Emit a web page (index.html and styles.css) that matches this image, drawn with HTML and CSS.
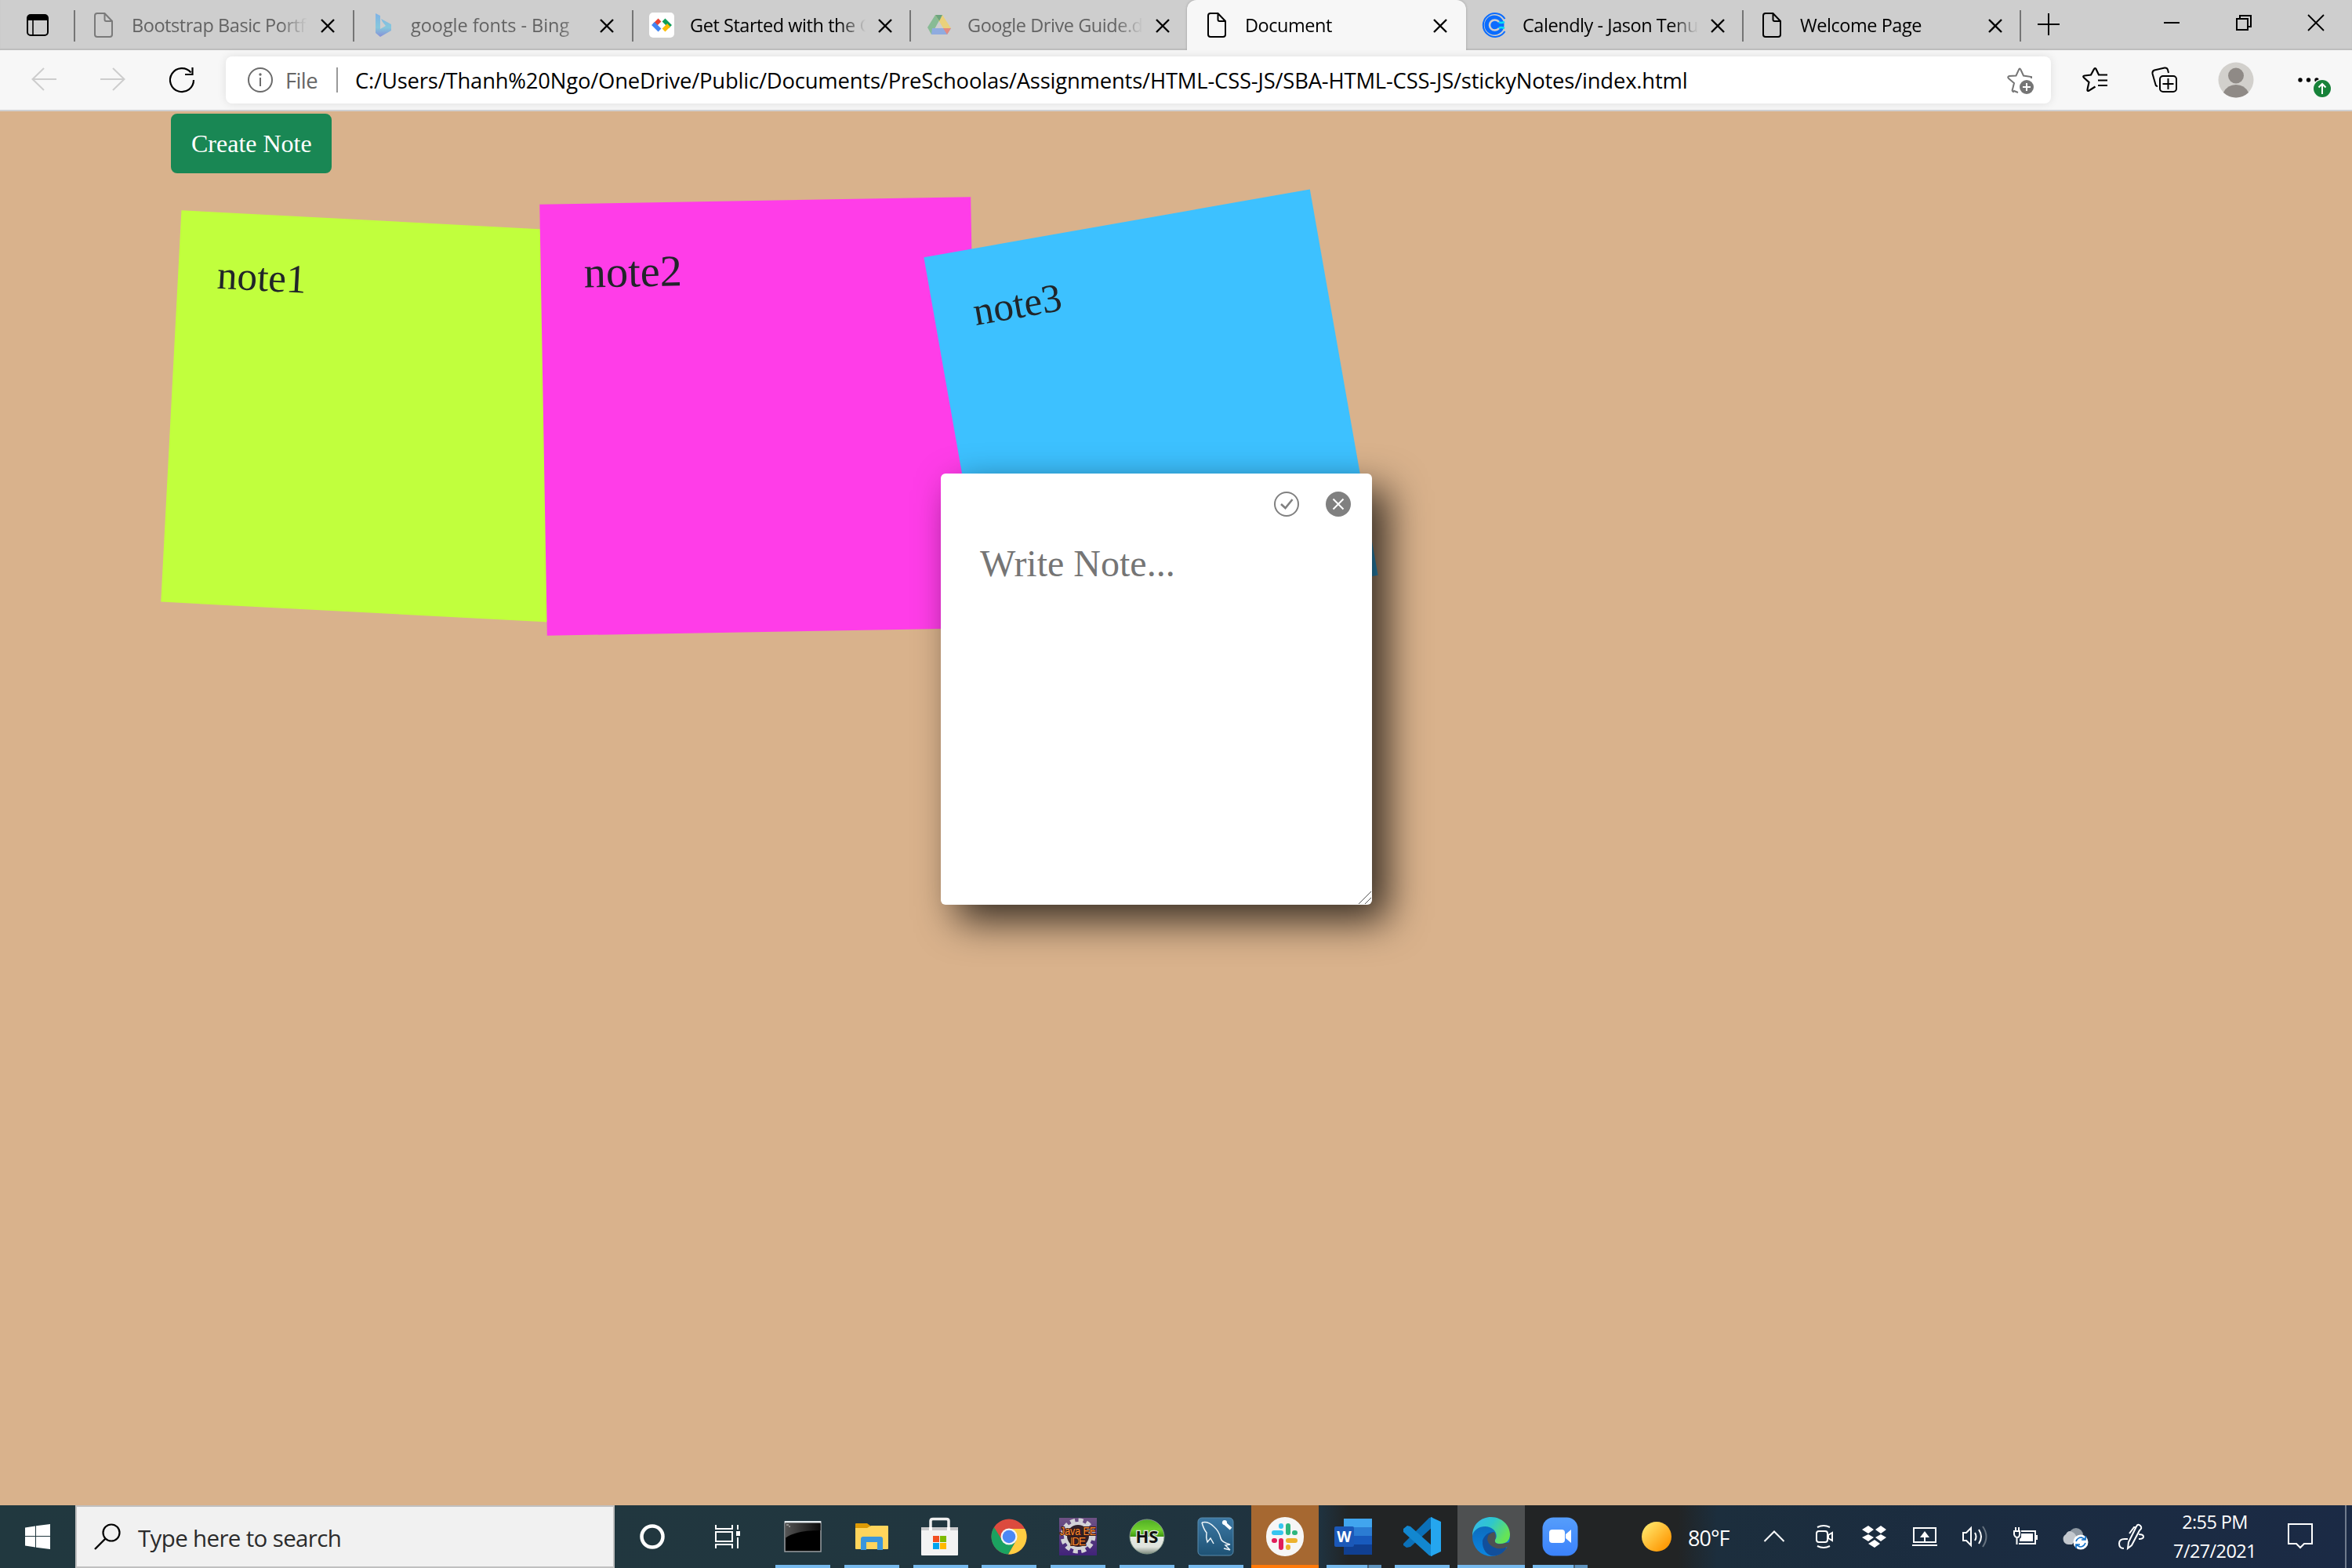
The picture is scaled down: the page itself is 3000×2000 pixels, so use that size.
FILE: index.html
```html
<!DOCTYPE html>
<html lang="en">
<head>
<meta charset="utf-8">
<title>Document</title>
<link rel="stylesheet" href="styles.css">
</head>
<body>
<svg class="defs" width="0" height="0">
  <defs>
    <symbol id="page" viewBox="0 0 32 32"><path d="M7 1H17.5L27 11V28Q27 31 24 31H8Q5 31 5 28V4Q5 1 8 1ZM17.5 1V9Q17.5 11 19.500 11H27" fill="none" stroke="currentColor" stroke-width="2"/></symbol>
    <symbol id="x" viewBox="0 0 20 20"><path d="M2 2 18 18M18 2 2 18" stroke="currentColor" stroke-width="2.4" fill="none"/></symbol>
    <linearGradient id="bingGrad" x1="0" y1="0" x2="0" y2="1"><stop offset="0" stop-color="#7fb2e6"/><stop offset=".6" stop-color="#86c8dc"/><stop offset="1" stop-color="#8790d8"/></linearGradient>
    <linearGradient id="sunGrad" x1="0" y1="0" x2="1" y2="1"><stop offset=".1" stop-color="#ffe66b"/><stop offset=".8" stop-color="#ff9d0a"/></linearGradient>
    <linearGradient id="cmdGrad" x1="0" y1="0" x2="1" y2="0"><stop offset="0" stop-color="#555"/><stop offset="1" stop-color="#0c0c0c"/></linearGradient>
    <linearGradient id="ideGrad" x1="0" y1="0" x2="0" y2="1"><stop offset="0" stop-color="#6f5285"/><stop offset="1" stop-color="#41237a"/></linearGradient>
    <linearGradient id="hsGrad" x1="0" y1="0" x2="0" y2="1"><stop offset="0" stop-color="#4fae24"/><stop offset=".3" stop-color="#72d030"/><stop offset=".49" stop-color="#3f9a10"/><stop offset=".5" stop-color="#e8ece6"/><stop offset=".8" stop-color="#dfe3dd"/><stop offset="1" stop-color="#7d8a7d"/></linearGradient>
    <linearGradient id="sqlGrad" x1="0" y1="0" x2="0" y2="1"><stop offset="0" stop-color="#3c78a4"/><stop offset="1" stop-color="#1e5274"/></linearGradient>
    <linearGradient id="zoomGrad" x1="0" y1="0" x2="0" y2="1"><stop offset="0" stop-color="#559dfb"/><stop offset="1" stop-color="#3b82fb"/></linearGradient>
    <linearGradient id="edgeTop" x1="0" y1="0" x2="1" y2=".5"><stop offset="0" stop-color="#36b5ef"/><stop offset=".5" stop-color="#2fc7cc"/><stop offset="1" stop-color="#66e455"/></linearGradient>
    <linearGradient id="edgeLeft" x1="0" y1="0" x2="0" y2="1"><stop offset="0" stop-color="#0d63b4"/><stop offset="1" stop-color="#0b86e0"/></linearGradient>
  </defs>
</svg>

<header class="tabs">
  <div class="tab-actions"><svg width="28" height="28" viewBox="0 0 28 28"><rect x="1" y="1" width="26" height="26" rx="4" fill="none" stroke="#000" stroke-width="2"/><path d="M1 8V4Q1 1 4 1H24Q27 1 27 4V8Z"/><path d="M8 8V27" stroke="#000" stroke-width="1.6"/></svg></div>
  <div class="tab asleep"><svg class="fav" width="32" height="32"><use href="#page"/></svg><span class="title">Bootstrap Basic Portfolio</span><svg class="close" width="20" height="20"><use href="#x"/></svg></div>
  <div class="tab asleep"><svg class="fav" width="32" height="32" viewBox="0 0 32 32"><path d="M7 1 13 4V21L20 17 16 12 14 8 27 15V23L13 31 7 26Z" fill="url(#bingGrad)"/></svg><span class="title bing">google fonts - Bing</span><svg class="close" width="20" height="20"><use href="#x"/></svg></div>
  <div class="tab"><svg class="fav" width="32" height="32" viewBox="0 0 32 32"><rect width="32" height="32" rx="5" fill="#fff"/><g fill="none" stroke-width="5.500"><path d="M13.500 9.500 7 16" stroke="#ea4335"/><path d="M5 14 13.500 22.500" stroke="#4285f4"/><path d="M18.500 9.500 27 18" stroke="#0f9d58"/><path d="M25 16 18.500 22.500" stroke="#fbbc04"/></g></svg><span class="title">Get Started with the Google</span><svg class="close" width="20" height="20"><use href="#x"/></svg></div>
  <div class="tab asleep"><svg class="fav" width="32" height="32" viewBox="0 0 32 32"><path d="M11 3H20L10 21 6 28 1 19Z" fill="#88bb95"/><path d="M11 3H20L31 20H21Z" fill="#ead17b"/><path d="M7 20H31L26 28H6Z" fill="#8fabdf"/><path d="M21 20H31L26 28Z" fill="#e38a80"/><path d="M11 3H20L16 11Z" fill="#6da47e"/><path d="M16 12 21 20H11Z" fill="#cecece"/></svg><span class="title">Google Drive Guide.docx</span><svg class="close" width="20" height="20"><use href="#x"/></svg></div>
  <div class="tab active"><svg class="fav" width="32" height="32"><use href="#page"/></svg><span class="title">Document</span><svg class="close" width="20" height="20"><use href="#x"/></svg></div>
  <div class="tab after"><svg class="fav" width="32" height="32" viewBox="0 0 32 32"><circle cx="16" cy="16" r="12.500" fill="#0a6cff"/><path d="M29.500 8A15 15 0 1 0 29.500 24" fill="none" stroke="#0a6cff" stroke-width="2"/><path d="M22 12Q20 9.500 16.500 9.500A6.500 6.500 0 0 0 16.500 22.500Q20 22.500 22 20" fill="none" stroke="#cecece" stroke-width="2.600"/><path d="M22 12Q24 14 29 12M22 20Q24 18 29 20" fill="none" stroke="#0ae0f4" stroke-width="2.600"/></svg><span class="title">Calendly - Jason Tenuta</span><svg class="close" width="20" height="20"><use href="#x"/></svg></div>
  <div class="tab"><svg class="fav" width="32" height="32"><use href="#page"/></svg><span class="title">Welcome Page</span><svg class="close" width="20" height="20"><use href="#x"/></svg></div>
  <div class="window-controls">
    <svg width="28" height="28" viewBox="0 0 28 28"><path d="M0 14H28M14 0V28" stroke="#000" stroke-width="2"/></svg>
    <div class="sys">
      <svg width="20" height="20" viewBox="0 0 20 20"><path d="M0 10H20" stroke="#000" stroke-width="2"/></svg>
      <svg width="20" height="20" viewBox="0 0 20 20"><path d="M1 5H15V19H1ZM5 5V1H19V15H15" fill="none" stroke="#000" stroke-width="2"/></svg>
      <svg width="20" height="20" viewBox="0 0 20 20"><path d="M0 0 20 20M20 0 0 20" stroke="#000" stroke-width="1.8"/></svg>
    </div>
  </div>
</header>

<nav class="toolbar">
  <div class="nav-buttons">
    <svg width="32" height="32" viewBox="0 0 32 32"><path d="M32 15H1M16 1 1.500 15 16 29" fill="none" stroke="#cdcdcd" stroke-width="2"/></svg>
    <svg width="32" height="32" viewBox="0 0 32 32"><path d="M0 15H31M16 1 30.500 15 16 29" fill="none" stroke="#cdcdcd" stroke-width="2"/></svg>
    <svg width="32" height="32" viewBox="0 0 32 32"><path d="M31 16A15 15 0 1 1 27.500 6.500M29.500 0V9H20" fill="none" stroke="#000" stroke-width="2.200"/></svg>
  </div>
  <div class="address">
    <svg width="32" height="32" viewBox="0 0 32 32"><circle cx="16" cy="16" r="15" fill="none" stroke="#6b6b6b" stroke-width="2"/><path d="M16 13V24" stroke="#6b6b6b" stroke-width="2"/><circle cx="16" cy="9" r="1.700" fill="#6b6b6b"/></svg>
    <span class="scheme">File</span>
    <span class="rule"></span>
    <span class="url">C:/Users/Thanh%20Ngo/OneDrive/Public/Documents/PreSchoolas/Assignments/HTML-CSS-JS/SBA-HTML-CSS-JS/stickyNotes/index.html</span>
    <svg class="star" width="36" height="36" viewBox="0 0 36 36"><path d="M14 32 9 30 8 31Q6 30 7 28L9 20 2 14Q0 12 3 11L11.500 10.500 15 3Q16 0 17.500 3L21 10.500 31 12V14" fill="none" stroke="#757575" stroke-width="2"/><circle cx="25" cy="25" r="9" fill="#757575"/><path d="M25 20V30M20 25H30" stroke="#fff" stroke-width="2"/></svg>
  </div>
  <div class="tools">
    <svg width="34" height="34" viewBox="0 0 34 34"><path d="M16.500 25.500 8 31Q6 31 6.500 29L8.500 20 2 14Q0 12 3 11.500L11 10.500 15 3Q16 1 17.500 3L21 10.500H32M20 17.500H32M20 24H32" fill="none" stroke="#000" stroke-width="2.200"/></svg>
    <svg width="34" height="34" viewBox="0 0 34 34"><rect x="11" y="12" width="21" height="20" rx="4" fill="none" stroke="#000" stroke-width="2"/><path d="M21.500 15V29M14.500 22H28.500M8 25Q6 25 5.500 23L1.500 9Q1 5.500 4 4.500L17 1.500Q20 1 21 4L22 8" fill="none" stroke="#000" stroke-width="2"/></svg>
    <svg width="46" height="46" viewBox="0 0 46 46"><circle cx="23" cy="23" r="22.500" fill="#d2d0cc"/><circle cx="23" cy="17.500" r="10" fill="#8f8a86"/><path d="M7 39Q12 29 23 29T39 39Q32 45.500 23 45.500T7 39Z" fill="#8f8a86"/></svg>
    <svg width="46" height="46" viewBox="0 0 46 46"><circle cx="6" cy="23" r="2.700"/><circle cx="16.500" cy="23" r="2.700"/><circle cx="27" cy="23" r="2.700"/><circle cx="34" cy="34" r="12.500" fill="#f7f7f7"/><circle cx="34" cy="34" r="11" fill="#178239"/><path d="M34 41V28M29.500 32.500 34 28 38.500 32.500" fill="none" stroke="#fff" stroke-width="2"/></svg>
  </div>
</nav>

<main class="board">
  <button class="create">Create Note</button>
  <section class="notes">
    <article class="note lime">note1</article>
    <article class="note pink">note2</article>
    <article class="note sky">note3</article>
  </section>
  <form class="editor">
    <div class="editor-actions">
      <svg width="32" height="32" viewBox="0 0 32 32"><circle cx="16" cy="16" r="15" fill="none" stroke="#808080" stroke-width="2"/><path d="M9 16 14.500 21 23.500 10" fill="none" stroke="#808080" stroke-width="2.600"/></svg>
      <svg width="32" height="32" viewBox="0 0 32 32"><circle cx="16" cy="16" r="16" fill="#808080"/><path d="M9.500 9.500 22.500 22.500M22.500 9.500 9.500 22.500" stroke="#fff" stroke-width="2"/></svg>
    </div>
    <p class="placeholder">Write Note...</p>
    <svg class="grip" width="18" height="18" viewBox="0 0 18 18"><path d="M1 17 17 1M9 17 17 9" stroke="#555" stroke-width="1"/></svg>
  </form>
</main>

<footer class="taskbar">
  <div class="start"><svg width="32" height="32" viewBox="0 0 32 32"><path d="M0 4.500 13 2.500V15H0ZM14 2.300 32 0V15H14ZM0 16H13V29.500L0 27.500ZM14 16H32V32L14 29.700Z" fill="#fff"/></svg></div>
  <div class="search"><svg width="34" height="34" viewBox="0 0 34 34"><circle cx="22" cy="12" r="10.500" fill="none" stroke="#000" stroke-width="2.200"/><path d="M14.500 19.500 1 33" stroke="#000" stroke-width="2.400"/></svg><span>Type here to search</span></div>
  <div class="launch"><svg width="34" height="34" viewBox="0 0 34 34"><circle cx="17" cy="17" r="13.500" fill="none" stroke="#fff" stroke-width="4.500"/></svg></div>
  <div class="launch"><svg width="34" height="32" viewBox="0 0 34 32"><g fill="none" stroke="#fff" stroke-width="2"><path d="M2 1V6H23V1M2 10H23V22H2ZM2 31V26H23V31M30 1V7M30 17V31"/></g><rect x="28" y="9" width="5" height="6" fill="#fff"/></svg></div>
  <div class="apps">
    <div class="app run"><svg width="48" height="40" viewBox="0 0 48 40"><rect x="1" y="1" width="46" height="38" fill="#000" stroke="#9a9fa3" stroke-width="1.500"/><path d="M1.500 3H46.500V12Q14 12 1.500 22Z" fill="url(#cmdGrad)"/><rect x="1" y="0" width="46" height="2.500" fill="#e6edf1"/><path d="M3 5H6M6 7H8" stroke="#ccc"/></svg></div>
    <div class="app run"><svg width="42" height="36" viewBox="0 0 42 36"><path d="M0 2Q0 1 1 1H15L19 4V9H0Z" fill="#dd9a05"/><path d="M0 7H15L20 4H41Q42 4 42 5V33Q42 34 41 34H1Q0 34 0 33Z" fill="#ffd55c"/><path d="M7 35V21Q7 18 10 18H32Q35 18 35 21V35H28V25H14V35Z" fill="#3b96db"/></svg></div>
    <div class="app run"><svg width="48" height="48" viewBox="0 0 48 48"><path d="M12 15V4Q12 1.500 15 1.500H32Q35 1.500 35 4V15" fill="none" stroke="#eee" stroke-width="3.500"/><path d="M0 12H47V47Q47 48 46 48H1Q0 48 0 47Z" fill="#f3f3f3"/><path d="M0 12H47V16H0Z" fill="#c9c9cb"/><path d="M10 12H14V16H10ZM33 12H37V16H33Z" fill="#fff"/><path d="M15 23H23V31H15Z" fill="#f25022"/><path d="M24 23H32V31H24Z" fill="#7fba00"/><path d="M15 32H23V40H15Z" fill="#00a4ef"/><path d="M24 32H32V40H24Z" fill="#ffb900"/></svg></div>
    <div class="app run"><svg width="46" height="46" viewBox="0 0 46 46"><circle cx="23" cy="23" r="22.500" fill="#dc4b3e"/><path d="M23 13H43.200A22.500 22.500 0 0 1 22 45.500L32 28Z" fill="#ffcd42"/><path d="M4 11A22.500 22.500 0 0 0 22 45.500L32 28 14.500 28Z" fill="#1ba260"/><circle cx="23" cy="23" r="10.500" fill="#f4f4f4"/><circle cx="23" cy="23" r="8.300" fill="#4b88f5"/></svg></div>
    <div class="app run"><svg width="48" height="48" viewBox="0 0 48 48"><rect width="48" height="48" fill="url(#ideGrad)"/><circle cx="24" cy="23" r="20" fill="none" stroke="#d4d4d8" stroke-width="5" stroke-dasharray="6 4.470"/><circle cx="24" cy="23" r="16" fill="#302028" stroke="#d4d4d8" stroke-width="4"/><g fill="#ff8c2e" stroke="#3a1a14" stroke-width="2" paint-order="stroke" font-family="Liberation Sans, sans-serif" font-size="14" text-anchor="middle"><text x="24" y="22" textLength="46" lengthAdjust="spacingAndGlyphs">Java EE</text><text x="24" y="35" textLength="20">IDE</text></g></svg></div>
    <div class="app run"><svg width="46" height="46" viewBox="0 0 46 46"><circle cx="23" cy="23" r="22" fill="url(#hsGrad)" stroke="#84998a"/><text x="23" y="31" text-anchor="middle" font-family="Open Sans, sans-serif" font-weight="700" font-size="22" fill="#111" stroke="#dfe8dc" stroke-width="2.500" paint-order="stroke">HS</text></svg></div>
    <div class="app run"><svg width="48" height="50" viewBox="0 0 48 50"><rect x="1" y="1" width="45" height="48" rx="5" fill="url(#sqlGrad)" stroke="#5a8cad"/><path d="M6 7Q14 5 21 12 28 18 30 27 31 32 42 35L36 36 42 42M6 7Q8 15 12 20 11 26 13 32L17 27 21 34M34 40 42 42" fill="none" stroke="#eef5f8" stroke-width="1.500"/><path d="M33 6 43 15" stroke="#fff" stroke-width="4"/><circle cx="35" cy="7" r="3" fill="#fff"/></svg></div>
    <div class="app slack"><svg width="50" height="52" viewBox="0 0 50 52"><rect x="1" y="1" width="48" height="50" rx="24" fill="#f6f6f6"/><g stroke-width="6" stroke-linecap="round"><path d="M11 21H20" stroke="#36c5f0"/><path d="M20 13V12" stroke="#36c5f0"/><path d="M29 12V21" stroke="#2eb67d"/><path d="M37 21H38" stroke="#2eb67d"/><path d="M29 31H38" stroke="#ecb22e"/><path d="M29 39V40" stroke="#ecb22e"/><path d="M20 31V40" stroke="#e01e5a"/><path d="M11 31H12" stroke="#e01e5a"/></g></svg></div>
    <div class="app run multi"><svg width="48" height="46" viewBox="0 0 48 46"><path d="M12 0H48V12H12Z" fill="#41a5ee"/><path d="M12 11H48V23H12Z" fill="#2b7cd3"/><path d="M12 22H48V34H12Z" fill="#185abd"/><path d="M12 33H48V46H12Z" fill="#103f91"/><rect x="0" y="10" width="25" height="26" rx="2" fill="#1b58b8"/><text x="12.500" y="30" text-anchor="middle" font-family="Open Sans, sans-serif" font-weight="700" font-size="19" fill="#fff">W</text></svg></div>
    <div class="app run"><svg width="48" height="52" viewBox="0 0 48 52"><path d="M0 35V37L4 40 9 39 37 14V1L33 2Z" fill="#0b70b8"/><path d="M0 16 5 12 9 13 37 38V51L33 50 0 20Z" fill="#1287d0"/><path d="M35 1 48 7V45L35 51Z" fill="#25a6ef"/></svg></div>
    <div class="app run current"><svg width="50" height="52" viewBox="0 0 50 52"><ellipse cx="25" cy="26" rx="24" ry="25" fill="url(#edgeLeft)"/><path d="M1 25C1 10 12 1 25 1 39 1 49 12 49 23 49 32 43 35 37 35 31 35 28 33 30 30 33 27 32 21 28 17 19 9 3 14 1 25Z" fill="url(#edgeTop)"/><path d="M30 20C21 19 16 25 14 31 13 43 21 51 28 50.500 36 50 42 46 45 39 35 43 22 38 21 31 21 26 23 22 30 20Z" fill="#124f9b"/><path d="M29 20Q20 22 20 30 22 38 32 41 40 42 45 39L50 39V33L43 34Q38 36 33 35 29 34 30 30 32 25 29 20Z" fill="#4e5051"/></svg></div>
    <div class="app run multi"><svg width="46" height="50" viewBox="0 0 46 50"><rect x=".5" y=".5" width="45" height="49" rx="14" fill="url(#zoomGrad)"/><rect x="9" y="16" width="20" height="17" rx="4" fill="#fff"/><path d="M30 22 37 16V33L30 27Z" fill="#fff"/></svg></div>
  </div>
  <div class="weather"><svg width="38" height="38" viewBox="0 0 38 38"><circle cx="19" cy="19" r="19" fill="url(#sunGrad)"/></svg><span>80°F</span></div>
  <div class="tray">
    <svg width="32" height="32" viewBox="0 0 32 32"><path d="M3.500 22 16 9.500 28.500 22" fill="none" stroke="#fff" stroke-width="2"/></svg>
    <svg width="32" height="32" viewBox="0 0 32 32"><g fill="none" stroke="#fff" stroke-width="2"><rect x="6" y="9" width="14" height="14" rx="3"/><path d="M21 14 26 11V21L21 18ZM7 4Q15 0 23 4M7 28Q15 32 23 28"/></g></svg>
    <svg width="32" height="32" viewBox="0 0 32 32"><path d="M8 2 15 7 8 12 0 7ZM24 2 31 7 24 12 17 7ZM8 13 15 17 8 22 0 17ZM24 13 31 17 24 22 17 17ZM16 20 23 25 16 30 8 25Z" fill="#fff"/></svg>
    <svg width="32" height="32" viewBox="0 0 32 32"><path d="M2 5H30V23H2ZM0 27H32M16 23V14" fill="none" stroke="#fff" stroke-width="2"/><path d="M16 9 22 17H10Z" fill="#fff"/></svg>
    <svg width="32" height="32" viewBox="0 0 32 32"><g fill="none" stroke="#fff" stroke-width="2"><path d="M1 11H5L11 5V27L5 21H1ZM16 11Q19 16 16 21M21 7Q27 16 21 25"/><path d="M26 3Q35 16 26 29" stroke="#66727f"/></g></svg>
    <svg width="32" height="32" viewBox="0 0 32 32"><path d="M11 9H29V25H8M4 4V9M8 4V9M2 9H9V13Q9 17 6 17T2 13ZM5.500 17V26" fill="none" stroke="#fff" stroke-width="2"/><path d="M11 12H26V22H9V19L11 17ZM29 14H32V20H29Z" fill="#fff"/></svg>
    <svg width="32" height="32" viewBox="0 0 32 32"><circle cx="17" cy="14" r="9" fill="#8e98a2"/><path d="M7 26A7 7 0 0 1 4 13Q7 7 12 10 17 12 18 18L12 26Z" fill="#c3c8ce"/><circle cx="23" cy="23" r="9.500" fill="#fff"/><path d="M17 22Q19 17 24 17L28 19M29 15V20H24M29 24Q27 29 22 29L18 27M17 31V26H22" fill="none" stroke="#1070c8" stroke-width="1.700"/></svg>
  </div>
  <div class="pen"><svg width="34" height="34" viewBox="0 0 34 34"><path d="M7 32Q1 32 1 26 1 20 8 20H12M12 32 13 24 23 4Q25 0 28 3T27 9L17 28ZM14 13 20 5 22 5M26 14Q32 14 32 17T26 20" fill="none" stroke="#fff" stroke-width="2"/></svg></div>
  <div class="clock"><span>2:55 PM</span><span>7/27/2021</span></div>
  <div class="action"><svg width="32" height="34" viewBox="0 0 32 34"><path d="M1 1H31V26H21L16 31 11 26H1Z" fill="none" stroke="#fff" stroke-width="2"/></svg></div>
  <div class="peek"></div>
</footer>
</body>
</html>
```
FILE: styles.css
```css
* { box-sizing: border-box; }
body {
  margin: 0;
  width: 3000px;
  height: 2000px;
  overflow: hidden;
  display: flex;
  flex-direction: column;
  font-family: "Open Sans", "Noto Sans", sans-serif;
}
svg { display: block; flex: none; overflow: visible; }
.defs { position: absolute; }

/* tab strip */
.tabs {
  height: 64px;
  flex: none;
  display: grid;
  grid-template-columns: 94px 356px 356px 354px 354px 356px 352px 354px 1fr;
  background: #cecece;
  box-shadow: inset 0 -2px 1px #bdbdbd;
}
.tab-actions { display: flex; align-items: center; padding-left: 34px; }
.tab {
  display: flex;
  align-items: center;
  min-width: 0;
  background: linear-gradient(#757575, #757575) 0 13px / 2px 40px no-repeat;
}
.fav { margin-left: 22px; }
.asleep .title { color: #636363; }
.asleep .fav { color: #7a7a7a; }
.title {
  width: 226px;
  margin: 0 13px 0 20px;
  overflow: hidden;
  white-space: nowrap;
  font-size: 23.5px;
  line-height: 62px;
  letter-spacing: -0.45px;
  -webkit-mask-image: linear-gradient(90deg, #000 190px, transparent 224px);
  mask-image: linear-gradient(90deg, #000 190px, transparent 224px);
}
.bing { letter-spacing: -0.05px; }
.close { margin-top: 2px; }
.asleep:nth-child(-n+3) .close { margin-left: 1px; }
.active { background: #f7f7f7; border-radius: 12px 12px 0 0; box-shadow: 0 0 3px #999; clip-path: inset(0 -4px 0 -4px); }
.after { background: none; }
.after .fav { margin-left: 20px; }
.window-controls {
  display: flex;
  align-items: center;
  justify-content: space-between;
  padding: 0 36px 2px 23px;
  background: linear-gradient(#757575, #757575) 0 13px / 2px 40px no-repeat;
}
.sys { display: flex; gap: 72px; padding-bottom: 4px; }

/* address row */
.toolbar {
  height: 78px;
  flex: none;
  display: flex;
  align-items: center;
  background: #f7f7f7;
  border-bottom: 2px solid #d0d0d2;
}
.nav-buttons { width: 288px; padding-left: 40px; display: flex; gap: 56px; }
.address {
  width: 2328px;
  height: 60px;
  padding: 0 20px 0 28px;
  display: flex;
  align-items: center;
  background: #fff;
  border-radius: 8px;
  box-shadow: 0 0 12px rgba(0, 0, 0, .1);
  font-size: 27.4px;
  white-space: nowrap;
}
.scheme { width: 65px; margin-left: 16px; color: #666; letter-spacing: -0.6px; }
.rule { width: 2px; height: 32px; background: #999; margin-right: 22px; }
.url { flex: 1; letter-spacing: -0.18px; }
.star { margin-top: 4px; }
.tools { flex: 1; display: flex; align-items: center; padding-left: 40px; }
.tools svg:nth-child(2) { margin-left: 54px; }
.tools svg:nth-child(3) { margin-left: 51px; }
.tools svg:nth-child(4) { margin-left: 53px; }

/* board */
.board {
  height: 1778px;
  flex: none;
  position: relative;
  padding: 3px 218px 0;
  background: #d9b28c;
  font-family: "Liberation Serif", serif;
}
.create {
  display: block;
  height: 76px;
  padding: 0 23px 0 24px;
  border: 2px solid #198754;
  border-radius: 8px;
  background: #198754;
  color: #fff;
  font: 32px/1 "Liberation Serif", serif;
}
.notes { display: flex; margin-top: 60px; }
.note {
  width: 500px;
  height: 500px;
  padding: 42px 50px;
  font-size: 51.2px;
  line-height: 76.8px;
  color: #212529;
}
.lime { background: #c1ff3d; transform: rotate(3deg); }
.pink { background: #ff3de8; transform: rotate(-1deg) scale(1.1); }
.sky { background: #3dc1ff; transform: rotate(-10deg); }
.editor {
  position: absolute;
  left: 1200px;
  top: 462px;
  width: 550px;
  height: 550px;
  padding: 23px 27px 0 50px;
  background: #fff;
  border-radius: 6px;
  box-shadow: 20px 20px 50px rgba(0, 0, 0, .75);
}
.editor-actions { display: flex; justify-content: flex-end; gap: 34px; }
.placeholder { margin: 24px 0 0; font-size: 48px; line-height: 72px; color: #757575; }
.grip { position: absolute; right: 0; bottom: 0; }

/* taskbar */
.taskbar {
  height: 80px;
  flex: none;
  display: flex;
  align-items: stretch;
  color: #fff;
  background: linear-gradient(90deg, #21383f 0, #21363f 1300px, #1f323f 1684px, #222425 1720px, #222425 2140px, #1c2e3d 2190px, #1b2c40 2500px, #1b2a45 100%);
}
.taskbar > div { display: flex; align-items: center; justify-content: center; flex: none; }
.taskbar > .start { width: 96px; }
.taskbar > .search {
  width: 688px;
  justify-content: flex-start;
  padding-left: 22px;
  border: 2px solid #c0c0c0;
  background: #f1f1f1;
  color: #2b2b2b;
  font-size: 29.500px;
  letter-spacing: -0.65px;
}
.search span { margin-left: 22px; padding-top: 3px; }
.launch { width: 96px; }
.taskbar > .apps { width: 1058px; margin-left: 4px; align-items: stretch; justify-content: flex-start; }
.app { width: 87.8px; flex: none; display: flex; align-items: center; justify-content: center; }
.run { background: linear-gradient(#76b9ed, #76b9ed) 9px 76px / 70px 4px no-repeat; }
.slack { background: linear-gradient(#ff7a0a, #ff7a0a) 0 76px / 100% 4px no-repeat, #a66831; width: 86px; margin: 0 1px; }
.multi { background: linear-gradient(90deg, #76b9ed 52px, #46627a 52px 54px, #5f93bd 54px) 9px 76px / 70px 4px no-repeat; }
.current { width: 86px; margin: 0 1px; background: linear-gradient(#76b9ed, #76b9ed) 0 76px / 100% 4px no-repeat, #4e5051; }
.taskbar > .weather { width: 193px; padding-left: 56px; justify-content: flex-start; font-size: 27px; letter-spacing: -1px; }
.weather span { margin-left: 21px; padding-top: 3px; }
.taskbar > .tray { gap: 32px; width: 448px; }
.taskbar > .pen { width: 80px; }
.taskbar > .clock { width: 132px; flex-direction: column; font-size: 23.5px; line-height: 37px; letter-spacing: -0.6px; }
.taskbar > .action { width: 86px; }
.taskbar > .peek { width: 2px; margin-left: 14px; background: #707b8c; }
```
